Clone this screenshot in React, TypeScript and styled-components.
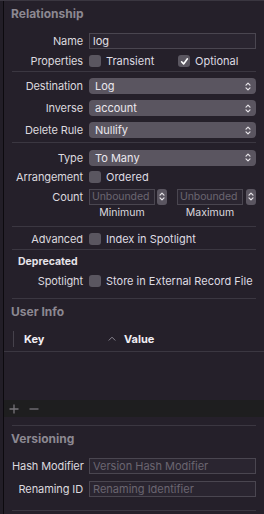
import React from "react";
import styled, { createGlobalStyle } from "styled-components";

const Global = createGlobalStyle`
  html, body { margin: 0; padding: 0; background: #25202a; }
  body { font-family: "Inter", "Noto Sans", sans-serif; font-size: 11px; color: #dedbe2; -webkit-font-smoothing: antialiased; }
  * { box-sizing: border-box; }
`;

const Root = styled.div`
  width: 264px;
  height: 514px;
  overflow: hidden;
  display: flex;
  background: #25202a;
  border-top: 1px solid #3a3640;
`;

const Strip = styled.div`
  width: 3px;
  flex: none;
  background: #221e27;
  border-right: 1px solid #0c0a0e;
  box-sizing: content-box;
`;

const Panel = styled.div`
  flex: 1;
  display: flex;
  flex-direction: column;
`;

const Section = styled.div<{ $mt?: number }>`
  padding: 0 8px;
  display: flex;
  flex-direction: column;
  margin-top: ${(p) => p.$mt ?? 0}px;
`;

const Header = styled.div`
  height: 26px;
  line-height: 26px;
  font-weight: 700;
  font-size: 12px;
  color: #8c8891;
  margin-left: -1px;
`;

const Sep = styled.div<{ $mt?: number }>`
  height: 1px;
  background: #3b3741;
  margin-top: ${(p) => p.$mt ?? 0}px;
`;

const Row = styled.div<{ $h?: number; $mt?: number }>`
  display: grid;
  grid-template-columns: 71px 1fr;
  column-gap: 6px;
  align-items: center;
  height: ${(p) => p.$h ?? 20}px;
  margin-top: ${(p) => p.$mt ?? 0}px;
`;

const Label = styled.div`
  text-align: right;
  white-space: nowrap;
  color: #dcd9df;
  letter-spacing: -0.1px;
`;

const Controls = styled.div`
  display: flex;
  align-items: center;
  min-width: 0;
`;

const Field = styled.div<{ $placeholder?: boolean; $w?: number }>`
  height: 16px;
  ${(p) => (p.$w ? `width: ${p.$w}px; flex: none; padding: 0 2px; font-size: 10.5px; letter-spacing: -0.1px;` : "flex: 1; padding: 0 3px;")}
  border: 1px solid #4a4650;
  background: #2a2530;
  line-height: 14px;
  color: ${(p) => (p.$placeholder ? "#6b6670" : "#e3e0e6")};
  white-space: nowrap;
  overflow: hidden;
`;

const Popup = styled.div`
  flex: 1;
  height: 16px;
  border-radius: 4px;
  background: #5a5560;
  display: flex;
  align-items: center;
  justify-content: space-between;
  padding: 0 5px 0 6px;
  color: #ebe8ee;
`;

const Check = styled.div<{ $on?: boolean }>`
  width: 12px;
  height: 12px;
  border-radius: 3px;
  background: #5a5660;
  flex: none;
  display: flex;
  align-items: center;
  justify-content: center;
`;

const CheckText = styled.span<{ $w?: number }>`
  margin-left: 5px;
  white-space: nowrap;
  ${(p) => (p.$w ? `width: ${p.$w}px;` : "")}
`;

const Stepper = styled.div<{ $ml?: number }>`
  width: 10px;
  height: 16px;
  border-radius: 3px;
  background: #5a5560;
  flex: none;
  margin-left: ${(p) => p.$ml ?? 2}px;
  display: flex;
  align-items: center;
  justify-content: center;
`;

const CountGroup = styled.div<{ $ml?: number }>`
  display: flex;
  align-items: center;
  margin-left: ${(p) => p.$ml ?? 0}px;
`;

const SubLabels = styled.div`
  display: flex;
  color: #dcd9df;
  font-size: 10.5px;
`;

const SubLabel = styled.div<{ $w: number; $ml?: number }>`
  width: ${(p) => p.$w}px;
  margin-left: ${(p) => p.$ml ?? 0}px;
  text-align: center;
`;

const SubHeader = styled.div<{ $mt?: number }>`
  height: 19px;
  line-height: 19px;
  font-weight: 700;
  font-size: 10.5px;
  color: #e6e3e9;
  padding-left: 6px;
  margin-top: ${(p) => p.$mt ?? 0}px;
`;

const TableHeader = styled.div`
  margin-top: 5px;
  height: 22px;
  padding-bottom: 4px;
  border-bottom: 1px solid #3b3741;
  display: flex;
  align-items: center;
`;

const ColBar = styled.div`
  width: 1px;
  height: 16px;
  background: #46424c;
  margin-left: 9px;
`;

const ColKey = styled.div`
  font-weight: 700;
  color: #f0edf3;
  margin-left: 10px;
  width: 84px;
`;

const ColValue = styled.div`
  font-weight: 700;
  color: #f0edf3;
  margin-left: 8px;
`;

const TableBody = styled.div`
  height: 48px;
  background: #25202a;
`;

const Footer = styled.div`
  height: 17px;
  background: #1e1e1f;
  display: flex;
  align-items: center;
  padding-left: 5px;
  gap: 10px;
`;

const Chevrons = () => (
  <svg width="6" height="9" viewBox="0 0 6 9" fill="none" stroke="#e8e5ea" strokeWidth="1.2" strokeLinecap="round" strokeLinejoin="round">
    <path d="M1 3.2 L3 1.2 L5 3.2" />
    <path d="M1 5.8 L3 7.8 L5 5.8" />
  </svg>
);

const CheckMark = () => (
  <svg width="9" height="9" viewBox="0 0 9 9" fill="none" stroke="#ffffff" strokeWidth="1.6" strokeLinecap="round" strokeLinejoin="round">
    <path d="M1.6 4.8 L3.6 7 L7.4 1.8" />
  </svg>
);

const Caret = () => (
  <svg width="8" height="5" viewBox="0 0 8 5" fill="none" stroke="#8a8690" strokeWidth="1" strokeLinecap="round">
    <path d="M1 4.2 L4 1.2 L7 4.2" />
  </svg>
);

const Plus = () => (
  <svg width="10" height="10" viewBox="0 0 10 10" stroke="#77747a" strokeWidth="1.3">
    <path d="M5 0.5 V9.5 M0.5 5 H9.5" />
  </svg>
);

const Minus = () => (
  <svg width="10" height="10" viewBox="0 0 10 10" stroke="#77747a" strokeWidth="1.3">
    <path d="M0.5 5 H9.5" />
  </svg>
);

const PopupRow = ({ label, value, mt, h = 20 }: { label: string; value: string; mt?: number; h?: number }) => (
  <Row $h={h} $mt={mt}>
    <Label>{label}</Label>
    <Controls>
      <Popup>
        <span>{value}</span>
        <Chevrons />
      </Popup>
    </Controls>
  </Row>
);

export default function App() {
  return (
    <>
      <Global />
      <Root>
        <Strip />
        <Panel>
          <Section>
            <Header>Relationship</Header>
            <Row $h={20} $mt={4}>
              <Label>Name</Label>
              <Controls>
                <Field>log</Field>
              </Controls>
            </Row>
            <Row $h={20}>
              <Label>Properties</Label>
              <Controls>
                <Check />
                <CheckText $w={72}>Transient</CheckText>
                <Check $on>
                  <CheckMark />
                </Check>
                <CheckText>Optional</CheckText>
              </Controls>
            </Row>
            <Sep $mt={0} />
            <PopupRow label="Destination" value="Log" mt={4} />
            <PopupRow label="Inverse" value="account" mt={2} />
            <PopupRow label="Delete Rule" value="Nullify" mt={2} />
            <Sep $mt={2} />
            <PopupRow label="Type" value="To Many" mt={5} h={19} />
            <Row $h={19}>
              <Label>Arrangement</Label>
              <Controls>
                <Check />
                <CheckText>Ordered</CheckText>
              </Controls>
            </Row>
            <Row $h={19} $mt={1}>
              <Label>Count</Label>
              <Controls>
                <CountGroup>
                  <Field $placeholder $w={66}>Unbounded</Field>
                  <Stepper>
                    <Chevrons />
                  </Stepper>
                </CountGroup>
                <CountGroup $ml={10}>
                  <Field $placeholder $w={66}>Unbounded</Field>
                  <Stepper $ml={3}>
                    <Chevrons />
                  </Stepper>
                </CountGroup>
              </Controls>
            </Row>
            <Row $h={13}>
              <div />
              <SubLabels>
                <SubLabel $w={66}>Minimum</SubLabel>
                <SubLabel $w={66} $ml={22}>Maximum</SubLabel>
              </SubLabels>
            </Row>
            <Sep $mt={7} />
            <Row $h={20} $mt={2}>
              <Label>Advanced</Label>
              <Controls>
                <Check />
                <CheckText>Index in Spotlight</CheckText>
              </Controls>
            </Row>
            <Sep $mt={0} />
            <SubHeader $mt={2}>Deprecated</SubHeader>
            <Row $h={19}>
              <Label>Spotlight</Label>
              <Controls>
                <Check />
                <CheckText>Store in External Record File</CheckText>
              </Controls>
            </Row>
            <Sep $mt={8} />
            <Header>User Info</Header>
          </Section>
          <TableHeader>
            <ColBar />
            <ColKey>Key</ColKey>
            <Caret />
            <ColValue>Value</ColValue>
          </TableHeader>
          <TableBody />
          <Footer>
            <Plus />
            <Minus />
          </Footer>
          <Section>
            <Sep $mt={8} />
            <Header>Versioning</Header>
            <Row $h={20} $mt={4}>
              <Label>Hash Modifier</Label>
              <Controls>
                <Field $placeholder>Version Hash Modifier</Field>
              </Controls>
            </Row>
            <Row $h={20} $mt={3}>
              <Label>Renaming ID</Label>
              <Controls>
                <Field $placeholder>Renaming Identifier</Field>
              </Controls>
            </Row>
            <Sep $mt={11} />
          </Section>
        </Panel>
      </Root>
    </>
  );
}
